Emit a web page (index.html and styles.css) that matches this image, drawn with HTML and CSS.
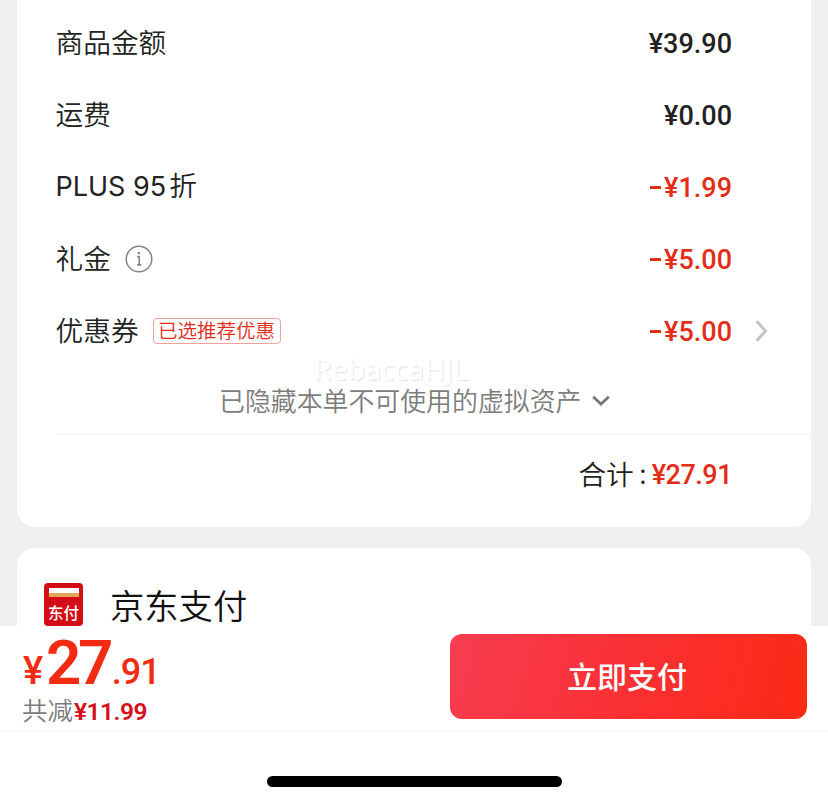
FILE: index.html
```html
<!DOCTYPE html>
<html lang="zh-CN">
<head>
<meta charset="utf-8">
<title>确认订单</title>
<link rel="stylesheet" href="styles.css">
</head>
<body>
<div class="page">
  <main class="content">
    <section class="card summary">
      <div class="row"><span class="label">商品金额</span><span class="price">¥39.90</span></div>
      <div class="row"><span class="label">运费</span><span class="price">¥0.00</span></div>
      <div class="row"><span class="label plus"><span class="latin">PLUS 95</span>折</span><span class="price red"><i class="minus"></i>¥1.99</span></div>
      <div class="row">
        <span class="label">礼金</span>
        <svg class="info" width="28" height="28" viewBox="0 0 28 28" fill="none" stroke="#858585"><circle cx="14" cy="14" r="12.8" stroke-width="1.5"/><circle cx="13.8" cy="8" r="1.3" fill="#858585" stroke="none"/><path d="M12 11.6h2.2v8M12 19.9h4.2" stroke-width="1.6"/></svg>
        <span class="price red"><i class="minus"></i>¥5.00</span>
      </div>
      <div class="row">
        <span class="label">优惠券</span>
        <span class="tag">已选推荐优惠</span>
        <span class="price red"><i class="minus"></i>¥5.00</span>
        <svg class="next" width="14" height="22" viewBox="0 0 14 22" fill="none" stroke="#c4c4c4" stroke-width="3"><path d="M1.7 1.3 10.5 11 1.7 20.7"/></svg>
      </div>
      <div class="hidden-assets">
        <span class="watermark">RebaccaHJL</span>
        <span class="hint">已隐藏本单不可使用的虚拟资产</span>
        <svg class="down" width="18" height="12" viewBox="0 0 18 12" fill="none" stroke="#777" stroke-width="2.8"><path d="M1.2 1.8 9 9 16.8 1.8"/></svg>
      </div>
      <div class="total"><span class="label">合计</span><span class="colon">:</span><span class="price red">¥27.91</span></div>
    </section>
    <section class="card payment">
      <div class="pay-icon"><span class="slot"></span><span class="pay-mark">东付</span></div>
      <span class="pay-name">京东支付</span>
    </section>
  </main>
  <footer class="bar">
    <div class="amount">
      <div class="big"><span class="yen">¥</span><span class="whole">27</span><span class="cents">.91</span></div>
      <div class="saved">共减<b>¥11.99</b></div>
    </div>
    <button class="pay">立即支付</button>
  </footer>
  <div class="home"><span class="home-line"></span></div>
</div>
</body>
</html>
```
FILE: styles.css
```css
* { box-sizing: border-box; }
body {
  margin: 0;
  background: #f0f0f0;
  color: #222;
  font-family: "Noto Sans CJK SC", sans-serif;
  font-weight: 350;
}
.page { display: flex; flex-direction: column; height: 804px; overflow: hidden; }
.content { height: 626px; padding: 0 17px; overflow: hidden; flex: none; }
.card { background: #fff; }
.summary { height: 527px; padding: 7px 0 0 38.5px; border-radius: 0 0 18px 18px; }
.row { display: flex; align-items: center; height: 72px; padding-right: 79px; position: relative; }
.label { margin-top: -4px; font-size: 27.7px; line-height: 40px; white-space: nowrap; }
.latin { font-family: Inter, sans-serif; font-size: 27px; font-weight: 400; margin-right: 3px; }
.price {
  display: flex;
  align-items: center;
  margin-left: auto;
  padding-top: 2px;
  font-family: Roboto, sans-serif;
  font-size: 27px;
  font-weight: 500;
  line-height: 40px;
}
.red { color: #e22d17; }
.minus { width: 11px; height: 3px; margin-right: 3px; margin-top: -1px; background: currentColor; }
.info { margin-left: 14px; }
.tag {
  height: 26px;
  margin-left: 14px;
  padding: 0 4.5px;
  border: 1.3px solid #eda39b;
  border-radius: 4px;
  color: #e02d1b;
  font-size: 19.5px;
  line-height: 22px;
  white-space: nowrap;
}
.next { position: absolute; left: 699.5px; top: 25px; }
.hidden-assets {
  position: relative;
  display: flex;
  align-items: center;
  height: 68px;
  padding-left: 163.5px;
  border-bottom: 1px solid #f2f2f2;
  color: #7c7c7c;
  font-size: 25.9px;
}
.hint { margin-top: -1px; line-height: 26px; }
.down { margin-left: 11px; margin-top: 1px; }
.watermark {
  position: absolute;
  left: 258.5px;
  top: -8px;
  color: #fff;
  font-family: "Noto Sans", sans-serif;
  font-size: 28.4px;
  font-weight: 400;
  line-height: 20px;
  text-shadow: 1px 1px 1px #e2e2e2;
}
.total { display: flex; align-items: center; height: 80px; padding-right: 79px; justify-content: flex-end; }
.total .price { margin-left: 0; padding-top: 0; letter-spacing: -.5px; }
.colon { width: 18px; margin-top: -4px; text-align: center; font-size: 27px; line-height: 40px; }
.payment { display: flex; height: 140px; margin-top: 21px; padding: 35px 0 0 27px; border-radius: 18px 18px 0 0; }
.pay-icon {
  width: 39px;
  height: 43px;
  padding-top: 5px;
  border-radius: 4px;
  background: #d30d17;
  color: #fff;
  text-align: center;
}
.slot { display: block; width: 30px; height: 9px; margin: 0 auto; background: linear-gradient(#fff 0 55%, #dda558 55%); }
.pay-mark { display: block; margin-top: 6px; font-size: 15.5px; font-weight: 500; line-height: 18px; }
.pay-name { margin-left: 27px; color: #111; font-size: 34.3px; line-height: 42px; }
.bar {
  display: flex;
  justify-content: space-between;
  flex: none;
  height: 106px;
  padding: 8px 21px 0 22px;
  border-bottom: 1px solid #f4f4f4;
  background: #fff;
}
.big { display: flex; align-items: baseline; height: 60px; color: #f22c12; font-family: Roboto, sans-serif; line-height: 58px; }
.yen { width: 24px; padding-left: 1px; font-size: 38px; font-weight: 500; line-height: 40px; }
.whole { font-size: 62px; font-weight: 600; letter-spacing: -3.5px; }
.cents { margin-left: 2px; font-size: 36px; font-weight: 500; line-height: 40px; letter-spacing: -1px; }
.saved { color: #7c7c7c; font-size: 25.5px; line-height: 30px; white-space: nowrap; }
.saved b { margin-left: 1px; color: #d5111b; font-family: Roboto, sans-serif; font-size: 24.5px; font-weight: 600; letter-spacing: -.5px; }
.pay {
  width: 357px;
  height: 85px;
  padding: 0 3px 3px 0;
  border: 0;
  border-radius: 12px;
  background: linear-gradient(105deg, #f73d50, #fa3034 50%, #fc2a14);
  color: #fff;
  font: 500 30px/80px "Noto Sans CJK SC", sans-serif;
}
.home { flex: 1; display: flex; justify-content: center; padding-top: 44px; background: #fff; }
.home-line { width: 295px; height: 11px; border-radius: 6px; background: #000; }
```
